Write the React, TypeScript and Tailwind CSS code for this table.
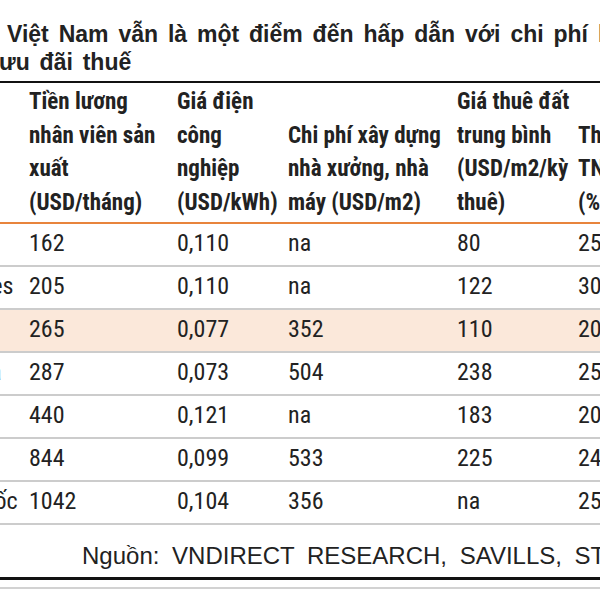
const rows = [
  { name: "Myanmar", wage: "162", power: "0,110", build: "na", land: "80", tax: "25" },
  { name: "Philippines", wage: "205", power: "0,110", build: "na", land: "122", tax: "30" },
  { name: "Việt Nam", wage: "265", power: "0,077", build: "352", land: "110", tax: "20", hl: true },
  { name: "Indonesia", wage: "287", power: "0,073", build: "504", land: "238", tax: "25" },
  { name: "Thái Lan", wage: "440", power: "0,121", build: "na", land: "183", tax: "20" },
  { name: "Malaysia", wage: "844", power: "0,099", build: "533", land: "225", tax: "24" },
  { name: "Trung Quốc", wage: "1042", power: "0,104", build: "356", land: "na", tax: "25" },
];

const headers = [
  ["Tiền lương", "nhân viên sản", "xuất", "(USD/tháng)"],
  ["Giá điện", "công", "nghiệp", "(USD/kWh)"],
  ["Chi phí xây dựng", "nhà xưởng, nhà", "máy (USD/m2)"],
  ["Giá thuê đất", "trung bình", "(USD/m2/kỳ", "thuê)"],
  ["Thuế suất", "TNDN", "(%)"],
];

// widths of the value columns (label column is separate)
const colW = ["w-[148px]", "w-[111px]", "w-[169px]", "w-[121px]", "w-[120px]"];

export default function App() {
  return (
    <div className="w-[600px] h-[600px] overflow-hidden bg-white text-[#222]">
      {/* Tiêu đề */}
      <div className="pt-[20px] font-['Liberation_Sans',Arial,sans-serif] font-bold text-[23px] leading-[28px] whitespace-nowrap [word-spacing:3.5px]">
        <div className="ml-[7px]">Việt Nam vẫn là một điểm đến hấp dẫn với chi phí lao động thấp và</div>
        <div className="-ml-[1px]">ưu đãi thuế</div>
      </div>

      <div className="mt-[5px] border-t-2 border-[#111]">
        <div className="-ml-[91px] w-[800px] font-['Roboto_Condensed',Roboto,sans-serif]">
          {/* Header */}
          <div className="flex items-end pt-[2px] pb-[3px] border-b-2 border-[#e8843c] font-bold text-[23px] leading-[33.6px]">
            <div className="w-[120px]" />
            {headers.map((h, i) => (
              <div key={i} className={`${colW[i]} flex flex-col whitespace-nowrap`}>
                {h.map((l) => (
                  <div key={l}>{l}</div>
                ))}
              </div>
            ))}
          </div>

          {/* Body */}
          {rows.map((r) => (
            <div
              key={r.name}
              className={`flex items-center h-[43px] pb-[3px] border-b-2 border-[#cccccc] text-[24px] leading-[28px] whitespace-nowrap ${r.hl ? "bg-[#fbe8da]" : ""}`}
            >
              <div className="w-[120px]">{r.name}</div>
              <div className={colW[0]}>{r.wage}</div>
              <div className={colW[1]}>{r.power}</div>
              <div className={colW[2]}>{r.build}</div>
              <div className={colW[3]}>{r.land}</div>
              <div className={colW[4]}>{r.tax}</div>
            </div>
          ))}
        </div>
      </div>

      {/* Nguồn */}
      <div className="mt-[17px] pl-[82px] font-['Liberation_Sans',Arial,sans-serif] text-[24px] leading-[28px] whitespace-nowrap [word-spacing:6px]">
        Nguồn: VNDIRECT RESEARCH, SAVILLS, STATISTA
      </div>
      <div className="mt-[7px] border-t-[3px] border-[#111]" />
      <div className="mt-[7px] border-t-2 border-[#d2d2d2]" />
    </div>
  );
}
